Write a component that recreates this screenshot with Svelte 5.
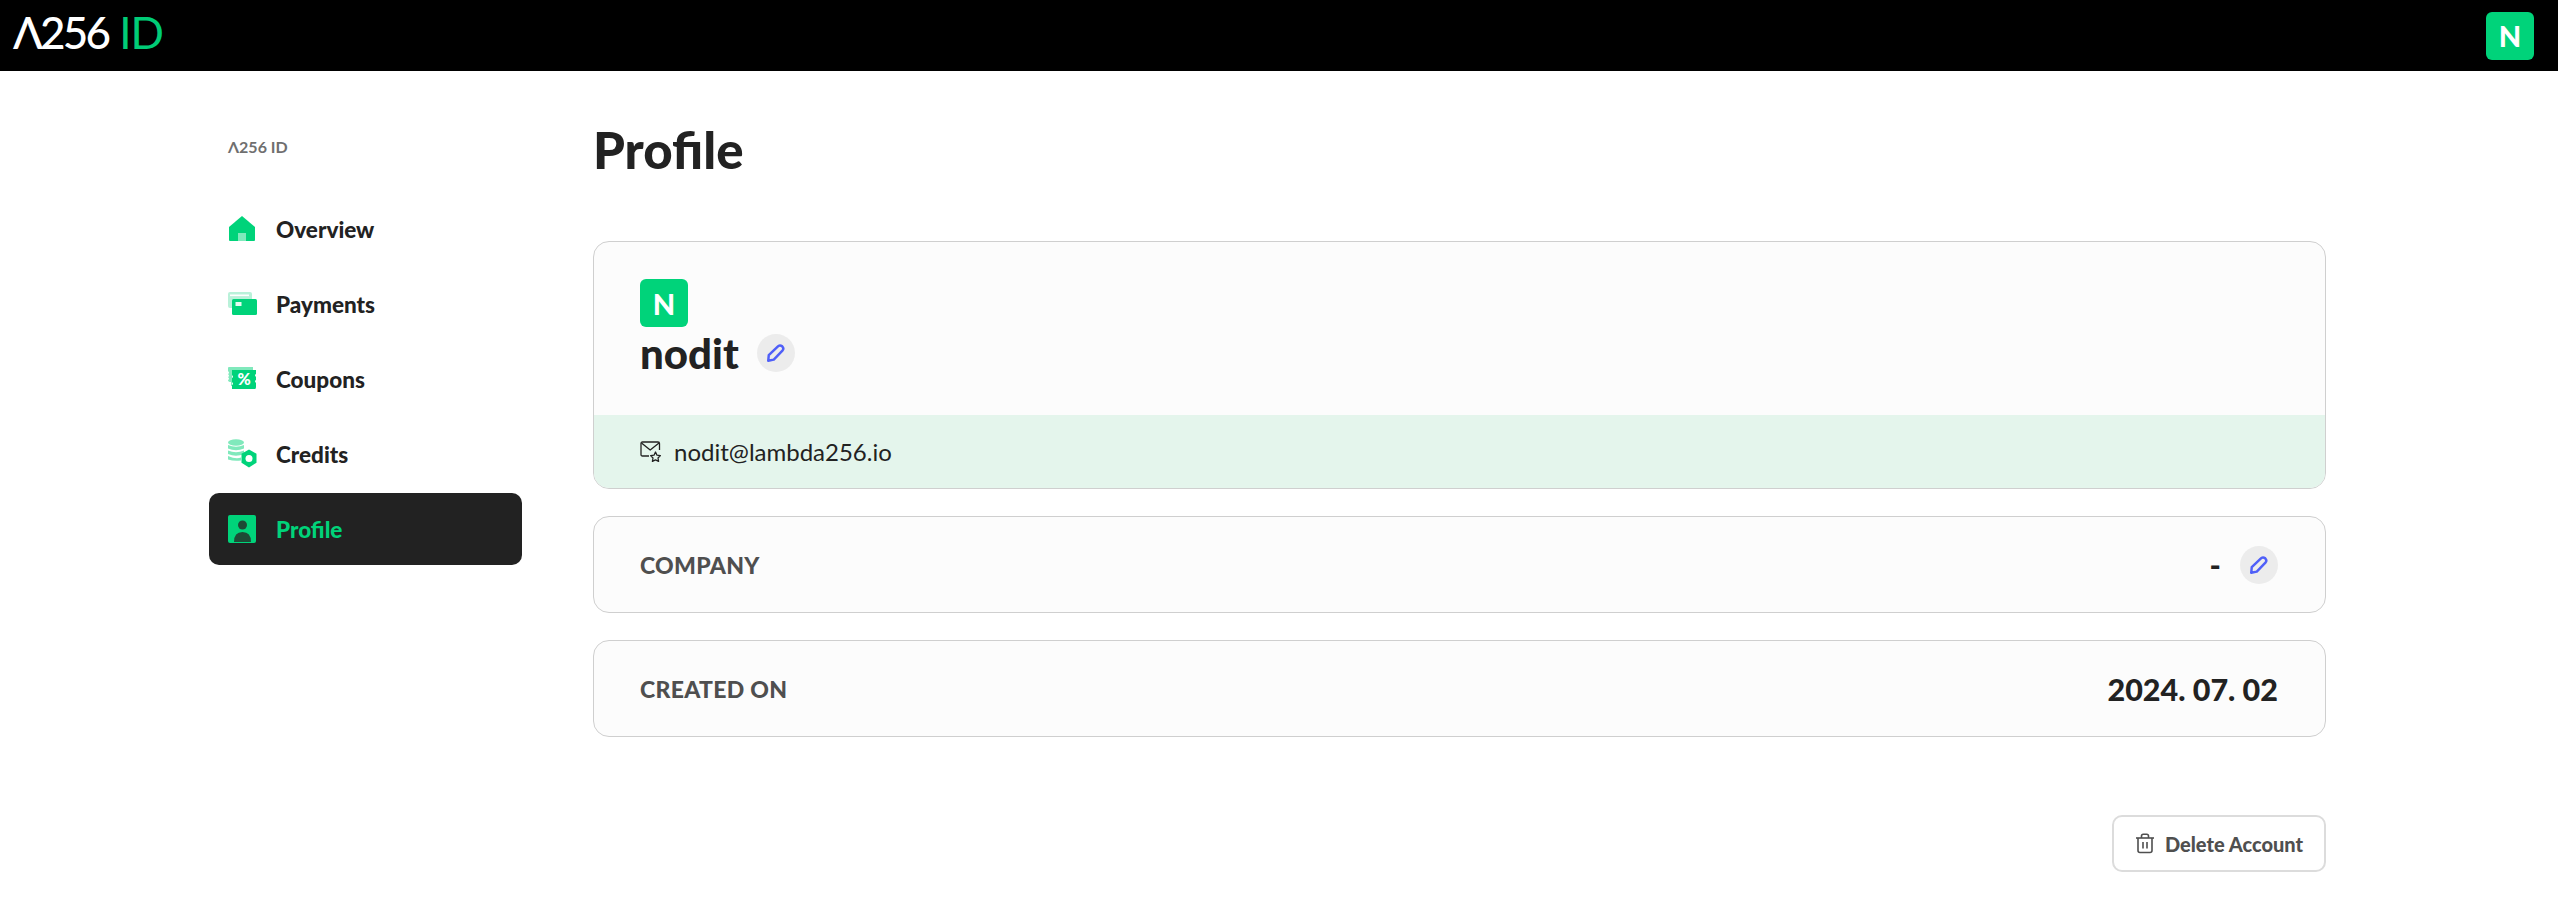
<script>
  const nav = [
    { label: 'Overview', icon: 'home' },
    { label: 'Payments', icon: 'card' },
    { label: 'Coupons', icon: 'coupon' },
    { label: 'Credits', icon: 'credit' },
    { label: 'Profile', icon: 'profile', active: true }
  ];
</script>

{#snippet pencil()}
  <button class="edit" aria-label="Edit">
    <svg width="20" height="20" viewBox="0 0 18 18" fill="none" stroke="#4f5ff8" stroke-width="2.2" stroke-linejoin="round">
      <path d="M2 16 L2.5 11 L11 2.8 Q12.7 1.5 14.6 3 Q16.4 4.8 15 6.6 L7 15 Z" />
    </svg>
  </button>
{/snippet}

<header class="topbar">
  <div class="logo"><span class="logo-white">Λ256</span><span class="logo-green">ID</span></div>
  <div class="avatar">N</div>
</header>

<div class="page">
  <aside class="side">
    <div class="brand">Λ256 ID</div>
    <nav class="nav">
      {#each nav as item}
        <a class="item" class:active={item.active} href="#top">
          <svg class="ico" width="28" height="28" viewBox="0 0 28 28" overflow="visible">
            {#if item.icon === 'home'}
              <path d="M14 1 L27 12 V25 Q27 26 26 26 H2 Q1 26 1 25 V12 Z" fill="#00d37a" />
              <rect x="10" y="18" width="8" height="8" fill="#80e9bc" />
            {:else if item.icon === 'card'}
              <rect x="0" y="2" width="24" height="16" rx="2" fill="#b9f1d9" />
              <rect x="2" y="4.5" width="19" height="1.6" fill="#fff" />
              <rect x="4" y="9" width="25" height="16" rx="1.5" fill="#00d37a" />
              <rect x="7.5" y="12" width="6" height="4" fill="#e6fbf1" />
            {:else if item.icon === 'coupon'}
              <path d="M0 3 Q0 2 1 2 H25 V5 H4 V21 H3 V17 Q0 17 0 15 Q2 14 0 12 Q2 11 0 9 Q2 8 0 6 Z" fill="#80e9bc" />
              <path d="M4 5 H28 V9 Q26 10 28 12 V15 Q26 16 28 18 V22 Q28 24 27 24 H4 V20 Q6 19 4 17 V13 Q6 12 4 10 Z" fill="#00d37a" />
              <text x="16" y="20" text-anchor="middle" class="pct">%</text>
            {:else if item.icon === 'credit'}
              <ellipse cx="8" cy="2.5" rx="8" ry="3.2" fill="#80e9bc" />
              <path d="M0 5 Q8 8.5 16 5 V8.5 Q8 12 0 8.5 Z" fill="#80e9bc" />
              <path d="M0 10.5 Q8 14 16 10.5 V14 Q8 17.5 0 14 Z" fill="#80e9bc" />
              <path d="M0 16 Q8 19.5 13 17.5 V20.5 Q6 21.5 0 19.5 Z" fill="#80e9bc" />
              <path d="M21 9.5 L28.5 13.7 V22.8 L21 27.5 L13.5 22.8 V13.7 Z" fill="#00d37a" />
              <circle cx="21" cy="18.5" r="3.5" fill="#fff" />
            {:else}
              <rect x="0" y="0" width="28" height="28" rx="2" fill="#00d37a" />
              <circle cx="14.5" cy="10" r="4.5" fill="#1e4a36" />
              <path d="M6 27 Q6 17 14.5 17 Q23 17 23 27 Z" fill="#1e4a36" />
            {/if}
          </svg>
          <span>{item.label}</span>
        </a>
      {/each}
    </nav>
  </aside>

  <main class="main">
    <h1>Profile</h1>
    <section class="card profile">
      <div class="profile-top">
        <div class="avatar">N</div>
        <div class="name-row"><span class="name">nodit</span>{@render pencil()}</div>
      </div>
      <div class="mail">
        <svg width="22" height="22" viewBox="0 0 22 22" fill="none" stroke="#222" stroke-width="1.3" stroke-linejoin="round">
          <path d="M9 15 H2.5 Q1 15 1 13.5 V2.5 Q1 1 2.5 1 H18 Q19.5 1 19.5 2.5 V9" />
          <path d="M1.5 2 L10.2 9 L19 2" />
          <path d="M15.5 11 L17 14.2 L20.4 14.6 L18 17 L18.6 20.4 L15.5 18.8 L12.4 20.4 L13 17 L10.6 14.6 L14 14.2 Z" />
        </svg>
        <span>nodit@lambda256.io</span>
      </div>
    </section>
    <section class="card row">
      <span class="label">COMPANY</span>
      <span class="value">-{@render pencil()}</span>
    </section>
    <section class="card row">
      <span class="label">CREATED ON</span>
      <span class="value">2024. 07. 02</span>
    </section>
    <div class="actions">
      <button class="del">
        <svg width="20" height="21" viewBox="0 0 20 21" fill="none" stroke="#4f4f4f" stroke-width="1.6" stroke-linejoin="round">
          <path d="M1 5 H19" />
          <path d="M6.5 5 V3 Q6.5 1.2 8.3 1.2 H11.7 Q13.5 1.2 13.5 3 V5" />
          <path d="M3 5 V17.5 Q3 19.5 5 19.5 H15 Q17 19.5 17 17.5 V5" />
          <path d="M8 9 V15.5 M12 9 V15.5" />
        </svg>
        Delete Account
      </button>
    </div>
  </main>
</div>

<style>
  :global(body) {
    margin: 0;
    background: #fff;
    font-family: Lato, "Noto Sans", sans-serif;
    color: #222;
  }
  .topbar {
    height: 71px;
    background: #000;
    display: flex;
    align-items: center;
    justify-content: space-between;
    padding: 0 24px 7px 13px;
    box-sizing: border-box;
  }
  .logo {
    font-size: 44px;
    line-height: 1;
    display: flex;
    gap: 11px;
    letter-spacing: -2.8px;
  }
  .logo-white { color: #fff; font-weight: 500; }
  .logo-green { color: #00cc77; font-weight: 400; letter-spacing: -1px; }
  .avatar {
    width: 48px;
    height: 48px;
    border-radius: 6px;
    background: #00d37a;
    color: #fff;
    font-weight: 900;
    font-size: 29px;
    display: flex;
    align-items: center;
    justify-content: center;
  }
  .topbar .avatar { margin-top: 7px; }
  .page {
    display: grid;
    grid-template-columns: 313px 1733px;
    column-gap: 71px;
    padding-left: 209px;
  }
  .side { padding-top: 67px; }
  .brand {
    font-size: 16px;
    font-weight: 700;
    color: #6f6f6f;
    padding-left: 19px;
    line-height: 18px;
    margin-bottom: 37px;
  }
  .nav {
    display: flex;
    flex-direction: column;
    gap: 3px;
  }
  .item {
    height: 72px;
    display: flex;
    align-items: center;
    gap: 20px;
    padding-left: 19px;
    border-radius: 10px;
    color: #222;
    font-size: 22.5px;
    font-weight: 900;
    text-decoration: none;
  }
  .item.active {
    background: #222;
    color: #00d37a;
  }
  .ico { flex: none; }
  .pct {
    font-size: 16px;
    font-weight: 900;
    fill: #fff;
    font-family: Lato, sans-serif;
  }
  .main { padding-top: 49px; }
  h1 {
    margin: 0 0 61px;
    font-size: 51px;
    line-height: 60px;
    font-weight: 900;
    color: #222;
  }
  .card {
    border: 1px solid #cfcfcf;
    border-radius: 16px;
    background: #fcfcfc;
    box-sizing: border-box;
    overflow: hidden;
  }
  .profile { height: 248px; margin-bottom: 27px; display: flex; flex-direction: column; }
  .profile-top { flex: 1; padding: 37px 46px 0; }
  .name-row {
    display: flex;
    align-items: center;
    gap: 18px;
    height: 52px;
    font-size: 42px;
    font-weight: 900;
  }
  .edit {
    width: 38px;
    height: 38px;
    padding: 0;
    border: 0;
    border-radius: 50%;
    background: #ececec;
    display: flex;
    align-items: center;
    justify-content: center;
  }
  .mail {
    height: 73px;
    background: #e4f5ec;
    display: flex;
    align-items: center;
    gap: 12px;
    padding-left: 46px;
    font-size: 24px;
    font-weight: 400;
  }
  .row {
    height: 97px;
    margin-bottom: 27px;
    display: flex;
    align-items: center;
    justify-content: space-between;
    padding: 0 47px 0 46px;
  }
  .label {
    font-size: 23px;
    font-weight: 900;
    letter-spacing: 0.3px;
    color: #4f4f4f;
  }
  .value {
    display: flex;
    align-items: center;
    gap: 19px;
    font-size: 30.5px;
    font-weight: 900;
    color: #222;
  }
  .actions {
    display: flex;
    justify-content: flex-end;
    margin-top: 78px;
  }
  .del {
    width: 214px;
    height: 57px;
    border: 2px solid #dcdcdc;
    border-radius: 10px;
    background: #fff;
    color: #4f4f4f;
    font-family: inherit;
    font-size: 20px;
    font-weight: 900;
    display: flex;
    align-items: center;
    justify-content: center;
    gap: 10px;
    padding: 0;
  }
</style>
